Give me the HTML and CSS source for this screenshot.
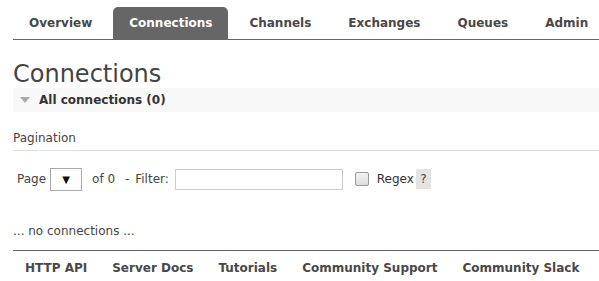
FILE: index.html
```html
<!DOCTYPE html>
<html>
<head>
<meta charset="utf-8">
<link rel="stylesheet" href="styles.css">
</head>
<body>
<div class="page">
  <nav class="menu">
    <a class="tab">Overview</a>
    <a class="tab active">Connections</a>
    <a class="tab">Channels</a>
    <a class="tab">Exchanges</a>
    <a class="tab">Queues</a>
    <a class="tab">Admin</a>
  </nav>
  <h1 class="title">Connections</h1>
  <div class="section-head"><span class="tri"></span><span>All connections (0)</span></div>
  <div class="pag-title">Pagination</div>
  <div class="filter-row">
    <span>Page</span>
    <span class="select"><span class="arrow">▼</span></span>
    <span class="of">of 0</span>
    <span class="flabel">- Filter:</span>
    <span class="input"></span>
    <span class="checkbox"></span>
    <span class="regex">Regex</span>
    <span class="help">?</span>
  </div>
  <p class="empty">... no connections ...</p>
  <footer class="footer">
    <a>HTTP API</a>
    <a>Server Docs</a>
    <a>Tutorials</a>
    <a>Community Support</a>
    <a>Community Slack</a>
  </footer>
</div>
</body>
</html>
```
FILE: styles.css
```css
html, body { margin: 0; padding: 0; background: #fff; }
body { font-family: "DejaVu Sans", Verdana, sans-serif; font-size: 12px; color: #444; }
.page { padding-left: 13px; overflow: hidden; }
.menu { display: flex; gap: 5px; margin-top: 7px; border-bottom: 1px solid #666; height: 32px; white-space: nowrap; }
.tab { display: block; padding: 0 16px; line-height: 32px; font-weight: bold; color: #484848; border-radius: 5px 5px 0 0; }
.tab.active { background: #666; color: #fff; }
.title { font-size: 24px; font-weight: normal; margin: 20px 0 0; line-height: 28px; color: #444; }
.section-head { background: #f8f8f8; height: 24px; display: flex; align-items: center; font-weight: bold; color: #333; margin-top: 0; }
.tri { width: 0; height: 0; border-left: 5px solid transparent; border-right: 5px solid transparent; border-top: 6px solid #aaa; margin: 0 9px 0 7px; }
.pag-title { margin-top: 19px; padding-bottom: 5px; border-bottom: 1px solid #ddd; }
.filter-row { display: flex; align-items: center; margin-top: 16px; padding-left: 4px; height: 24px; }
.select { width: 32px; height: 23px; border: 1px solid #aaa; box-sizing: border-box; margin-left: 4px; display: flex; align-items: center; justify-content: center; font-size: 10px; color: #111; }
.of { margin-left: 10px; }
.flabel { margin-left: 10px; word-spacing: 2px; }
.input { width: 168px; height: 21px; border: 1px solid #ccc; box-sizing: border-box; margin-left: 6px; }
.checkbox { width: 12px; height: 12px; border: 1px solid #999; border-radius: 2px; background: linear-gradient(#f4f4f4, #ddd); margin-left: 12px; }
.regex { margin-left: 8px; color: #333; }
.help { background: #e4e4e4; width: 15px; height: 20px; display: flex; align-items: center; justify-content: center; margin-left: 2px; }
.empty { margin: 33px 0 0; line-height: 15px; }
.footer { display: flex; gap: 25px; border-top: 1px solid #666; margin-top: 11px; padding: 10px 0 0 12px; font-weight: bold; color: #484848; white-space: nowrap; }
```
